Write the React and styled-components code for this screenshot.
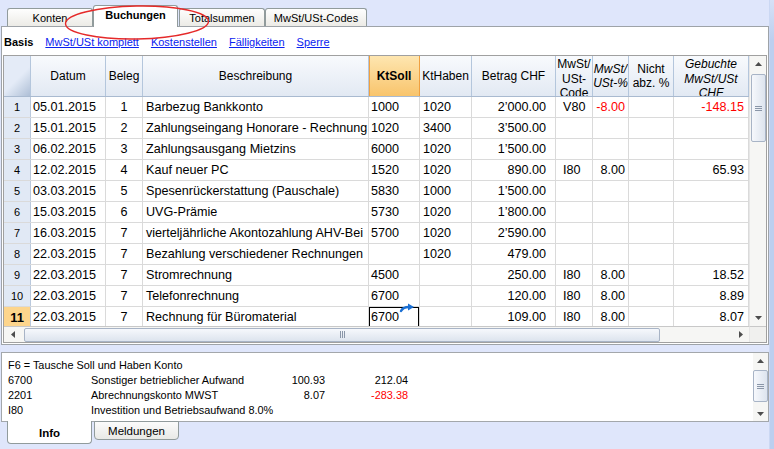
import React from 'react'
import styled, { createGlobalStyle } from 'styled-components'

const GlobalStyle = createGlobalStyle`
  html, body { margin: 0; padding: 0; }
  body {
    background: #dfe6fb;
    font-family: "Liberation Sans", Arial, sans-serif;
  }
`

const COLS = '27px 75px 37px 226px 51px 52px 84px 37px 36px 45px 75px'

const Window = styled.div`
  position: relative;
  width: 774px;
  height: 449px;
  overflow: hidden;
  display: flex;
  background: #dfe6fb;
`

const Main = styled.div`
  width: 769px;
  display: flex;
  flex-direction: column;
`

const EdgeStrip = styled.div`
  width: 4px;
  border-left: 1px solid #cbd8f3;
  background: linear-gradient(#d6e1f7, #bccfef 40px, #bccfef);
`

const TabBar = styled.div`
  height: 26px;
  display: flex;
  align-items: flex-end;
  padding-left: 7px;
  box-sizing: border-box;
`

const Tab = styled.div`
  box-sizing: border-box;
  width: ${p => p.$w}px;
  height: ${p => (p.$active ? 22 : 18)}px;
  margin-right: ${p => p.$gap || 0}px;
  margin-bottom: ${p => (p.$active ? -1 : 0)}px;
  border: 1px solid #919b9c;
  border-bottom: none;
  border-radius: 3px 3px 0 0;
  background: ${p => (p.$active ? '#fff' : 'linear-gradient(#fefefe, #ecebe6)')};
  font-size: 11px;
  font-weight: ${p => (p.$active ? 'bold' : 'normal')};
  color: #000;
  display: flex;
  align-items: center;
  justify-content: center;
  padding-bottom: ${p => (p.$active ? 3 : 0)}px;
  position: relative;
  z-index: ${p => (p.$active ? 2 : 1)};
`

const Panel = styled.div`
  box-sizing: border-box;
  margin-left: 1px;
  width: 768px;
  height: 319px;
  background: #fff;
  border: 1px solid #9ea3a8;
  display: flex;
  flex-direction: column;
`

const SubTabs = styled.div`
  height: 28px;
  display: flex;
  align-items: center;
  gap: 12px;
  padding: 1px 0 0 2px;
  box-sizing: border-box;
  font-size: 11px;
`

const SubTabActive = styled.span`
  font-weight: bold;
  color: #000;
`

const SubTabLink = styled.a`
  color: #0a22f0;
  text-decoration: underline;
  cursor: pointer;
`

const Grid = styled.div`
  box-sizing: border-box;
  margin: 0 1px;
  height: 288px;
  border: 1px solid #a0a0a0;
  display: grid;
  grid-template-columns: 745px 17px;
  grid-template-rows: 270px 16px;
`

const TableArea = styled.div`
  overflow: hidden;
  position: relative;
`

const HeaderRow = styled.div`
  display: grid;
  grid-template-columns: ${COLS};
  height: 41px;
  box-sizing: border-box;
  border-bottom: 1px solid #a9bad0;
`

const HeaderCell = styled.div`
  box-sizing: border-box;
  display: flex;
  flex-direction: column;
  align-items: center;
  justify-content: ${p => (p.$top ? 'flex-start' : 'center')};
  padding-top: ${p => (p.$top ? 1 : 0)}px;
  text-align: center;
  font-size: 12px;
  line-height: 14.5px;
  font-style: ${p => (p.$italic ? 'italic' : 'normal')};
  font-weight: ${p => (p.$active ? 'bold' : 'normal')};
  overflow: hidden;
  border-right: 1px solid ${p => (p.$active ? '#f0a040' : '#b4c6dc')};
  box-shadow: ${p => (p.$active ? 'inset 1px 0 0 #f0a040' : 'none')};
  background: ${p =>
    p.$active
      ? 'linear-gradient(#fee6b0, #f8c46c)'
      : 'linear-gradient(#f8fafd, #e2e9f3)'};
`

const CornerCell = styled.div`
  border-right: 1px solid #b4c6dc;
  background: linear-gradient(135deg, #e4ebf7 55%, #aebfd6);
`

const Row = styled.div`
  display: grid;
  grid-template-columns: ${COLS};
  height: 21px;
  box-sizing: border-box;
  border-bottom: 1px solid #dadada;
  position: relative;
`

const NumCell = styled.div`
  display: flex;
  align-items: center;
  justify-content: center;
  font-size: ${p => (p.$current ? 13 : 11)}px;
  font-weight: ${p => (p.$current ? 'bold' : 'normal')};
  background: ${p => (p.$current ? '#fdd58c' : '#e1e9f5')};
  border-right: 1px solid #b9c8dc;
`

const Cell = styled.div`
  box-sizing: border-box;
  position: relative;
  display: flex;
  align-items: center;
  justify-content: ${p =>
    p.$align === 'right' ? 'flex-end' : p.$align === 'center' ? 'center' : 'flex-start'};
  padding: 0 ${p => (p.$align === 'right' ? p.$pad : 0)}px 0
    ${p => (p.$align === 'left' ? p.$pad : 0)}px;
  font-size: 12.6px;
  white-space: nowrap;
  overflow: ${p => (p.$editing ? 'visible' : 'hidden')};
  color: ${p => (p.$red ? '#ff0000' : '#000')};
  border-right: 1px solid #dadada;
  box-shadow: ${p => (p.$editing ? 'inset 0 0 0 1px #000' : 'none')};
  z-index: ${p => (p.$editing ? 3 : 'auto')};
`

const EditArrow = styled.svg`
  position: absolute;
  left: 31px;
  top: -4px;
  width: 14px;
  height: 9px;
  overflow: visible;
`

const VScroll = styled.div`
  display: flex;
  flex-direction: column;
  align-items: center;
  background: #f6f6f4;
  border-left: 1px solid #e6e6e6;
  position: relative;
`

const HScroll = styled.div`
  display: flex;
  align-items: center;
  background: #f6f6f4;
  border-top: 1px solid #c8c8c8;
  position: relative;
`

const ArrowBox = styled.div`
  width: ${p => p.$w}px;
  height: ${p => p.$h}px;
  display: flex;
  align-items: center;
  justify-content: center;
  flex-shrink: 0;
`

const VThumb = styled.div`
  box-sizing: border-box;
  width: 15px;
  height: ${p => p.$h}px;
  margin-top: ${p => p.$top}px;
  border: 1px solid #a8b4c6;
  border-radius: 2px;
  background: linear-gradient(90deg, #f6f8fc, #dde4ee);
  display: flex;
  align-items: center;
  justify-content: center;
`

const HThumb = styled.div`
  box-sizing: border-box;
  height: 14px;
  width: ${p => p.$w}px;
  margin-left: ${p => p.$left}px;
  border: 1px solid #a8b4c6;
  border-radius: 2px;
  background: linear-gradient(#f6f8fc, #dde4ee);
  display: flex;
  align-items: center;
  justify-content: center;
`

const Spacer = styled.div`
  flex: 1;
`

const Corner = styled.div`
  background: #f0f0ee;
  border-top: 1px solid #c8c8c8;
  border-left: 1px solid #e6e6e6;
`

const InfoPanel = styled.div`
  box-sizing: border-box;
  margin: 7px 0 0 1px;
  width: 768px;
  height: 70px;
  background: #fff;
  border: 1px solid #a3a7ab;
  display: flex;
`

const InfoText = styled.div`
  flex: 1;
  padding: 5px 0 0 6px;
  display: grid;
  grid-template-columns: 83px 174px 60px 83px;
  grid-auto-rows: 15px;
  align-content: start;
  font-size: 10.9px;
  line-height: 15px;
`

const InfoFull = styled.div`
  grid-column: 1 / -1;
`

const InfoCol = styled.div`
  text-align: ${p => (p.$right ? 'right' : 'left')};
  color: ${p => (p.$red ? '#ff0000' : '#000')};
  white-space: nowrap;
`

const InfoScroll = styled.div`
  width: 15px;
  display: flex;
  flex-direction: column;
  align-items: center;
  background: #f6f6f4;
`

const BottomTabs = styled.div`
  display: flex;
  align-items: flex-start;
  padding-left: 7px;
`

const BottomTab = styled.div`
  box-sizing: border-box;
  width: ${p => p.$w}px;
  height: ${p => (p.$active ? 23 : 19)}px;
  margin-top: -1px;
  margin-right: 2px;
  border: 1px solid #919b9c;
  border-top: ${p => (p.$active ? 'none' : '1px solid #919b9c')};
  border-radius: 0 0 4px 4px;
  background: ${p => (p.$active ? '#fff' : 'linear-gradient(#fbfbfb, #e9e9e6)')};
  font-size: 11.5px;
  font-weight: ${p => (p.$active ? 'bold' : 'normal')};
  display: flex;
  align-items: center;
  justify-content: center;
  padding-top: ${p => (p.$active ? 2 : 0)}px;
  position: relative;
  z-index: ${p => (p.$active ? 2 : 1)};
`

const Ellipse = styled.svg`
  position: absolute;
  left: 60px;
  top: 3px;
  width: 156px;
  height: 40px;
  pointer-events: none;
  z-index: 5;
`

const columns = [
  { key: 'datum', title: ['Datum'], align: 'left', pad: 2 },
  { key: 'beleg', title: ['Beleg'], align: 'center', pad: 0 },
  { key: 'text', title: ['Beschreibung'], align: 'left', pad: 3 },
  { key: 'soll', title: ['KtSoll'], align: 'left', pad: 2, active: true },
  { key: 'haben', title: ['KtHaben'], align: 'left', pad: 3 },
  { key: 'betrag', title: ['Betrag CHF'], align: 'right', pad: 9 },
  { key: 'code', title: ['MwSt/', 'USt-', 'Code'], align: 'left', pad: 7, top: true },
  { key: 'pct', title: ['MwSt/', 'USt-%'], align: 'right', pad: 3, italic: true },
  { key: 'nicht', title: ['Nicht', 'abz. %'], align: 'right', pad: 3 },
  { key: 'mwst', title: ['Gebuchte', 'MwSt/USt', 'CHF'], align: 'right', pad: 4, italic: true, top: true },
]

const rows = [
  { datum: '05.01.2015', beleg: '1', text: 'Barbezug Bankkonto', soll: '1000', haben: '1020', betrag: '2’000.00', code: 'V80', pct: '-8.00', mwst: '-148.15', red: ['pct', 'mwst'] },
  { datum: '15.01.2015', beleg: '2', text: 'Zahlungseingang Honorare - Rechnung', soll: '1020', haben: '3400', betrag: '3’500.00' },
  { datum: '06.02.2015', beleg: '3', text: 'Zahlungsausgang Mietzins', soll: '6000', haben: '1020', betrag: '1’500.00' },
  { datum: '12.02.2015', beleg: '4', text: 'Kauf neuer PC', soll: '1520', haben: '1020', betrag: '890.00', code: 'I80', pct: '8.00', mwst: '65.93' },
  { datum: '03.03.2015', beleg: '5', text: 'Spesenrückerstattung (Pauschale)', soll: '5830', haben: '1000', betrag: '1’500.00' },
  { datum: '15.03.2015', beleg: '6', text: 'UVG-Prämie', soll: '5730', haben: '1020', betrag: '1’800.00' },
  { datum: '16.03.2015', beleg: '7', text: 'vierteljährliche Akontozahlung AHV-Bei', soll: '5700', haben: '1020', betrag: '2’590.00' },
  { datum: '22.03.2015', beleg: '7', text: 'Bezahlung verschiedener Rechnungen', soll: '', haben: '1020', betrag: '479.00' },
  { datum: '22.03.2015', beleg: '7', text: 'Stromrechnung', soll: '4500', haben: '', betrag: '250.00', code: 'I80', pct: '8.00', mwst: '18.52' },
  { datum: '22.03.2015', beleg: '7', text: 'Telefonrechnung', soll: '6700', haben: '', betrag: '120.00', code: 'I80', pct: '8.00', mwst: '8.89' },
  { datum: '22.03.2015', beleg: '7', text: 'Rechnung für Büromaterial', soll: '6700', haben: '', betrag: '109.00', code: 'I80', pct: '8.00', mwst: '8.07', current: true },
]

const Tri = ({ dir }) => {
  const pts = {
    up: '0,4 3.5,0 7,4',
    down: '0,0 3.5,4 7,0',
    left: '4,0 0,3.5 4,7',
    right: '0,0 4,3.5 0,7',
  }[dir]
  const vert = dir === 'up' || dir === 'down'
  return (
    <svg width={vert ? 7 : 4} height={vert ? 4 : 7} viewBox={vert ? '0 0 7 4' : '0 0 4 7'}>
      <polygon points={pts} fill="#4d4d4d" />
    </svg>
  )
}

const Grip = ({ vertical }) =>
  vertical ? (
    <svg width="7" height="7" viewBox="0 0 7 7">
      <path d="M0 1.5h7M0 3.5h7M0 5.5h7" stroke="#8a96a8" strokeWidth="1" />
    </svg>
  ) : (
    <svg width="7" height="7" viewBox="0 0 7 7">
      <path d="M1.5 0v7M3.5 0v7M5.5 0v7" stroke="#8a96a8" strokeWidth="1" />
    </svg>
  )

export default function App() {
  return (
    <Window>
      <GlobalStyle />
      <Main>
        <TabBar>
          <Tab $w={86}>Konten</Tab>
          <Tab $w={85} $gap={1} $active>Buchungen</Tab>
          <Tab $w={86}>Totalsummen</Tab>
          <Tab $w={102}>MwSt/USt-Codes</Tab>
        </TabBar>

        <Panel>
          <SubTabs>
            <SubTabActive>Basis</SubTabActive>
            <SubTabLink>MwSt/USt komplett</SubTabLink>
            <SubTabLink>Kostenstellen</SubTabLink>
            <SubTabLink>Fälligkeiten</SubTabLink>
            <SubTabLink>Sperre</SubTabLink>
          </SubTabs>

          <Grid>
            <TableArea>
              <HeaderRow>
                <CornerCell />
                {columns.map(c => (
                  <HeaderCell key={c.key} $active={c.active} $italic={c.italic} $top={c.top}>
                    {c.title.map(t => (
                      <span key={t}>{t}</span>
                    ))}
                  </HeaderCell>
                ))}
              </HeaderRow>
              {rows.map((r, i) => (
                <Row key={i}>
                  <NumCell $current={r.current}>{i + 1}</NumCell>
                  {columns.map(c => {
                    const editing = r.current && c.key === 'soll'
                    return (
                      <Cell
                        key={c.key}
                        $align={c.align}
                        $pad={c.pad}
                        $red={r.red && r.red.includes(c.key)}
                        $editing={editing}
                      >
                        {r[c.key] || ''}
                        {editing && (
                          <EditArrow viewBox="0 0 14 9">
                            <path d="M1 8 C2.5 5 5 4 9 4" fill="none" stroke="#1a6fd4" strokeWidth="2.4" strokeLinecap="round" />
                            <polygon points="8,0.5 14,4 8,7.5" fill="#1a6fd4" />
                          </EditArrow>
                        )}
                      </Cell>
                    )
                  })}
                </Row>
              ))}
            </TableArea>

            <VScroll>
              <ArrowBox $w={16} $h={16}><Tri dir="up" /></ArrowBox>
              <VThumb $h={68} $top={2}><Grip vertical /></VThumb>
              <Spacer />
              <ArrowBox $w={16} $h={16}><Tri dir="down" /></ArrowBox>
            </VScroll>

            <HScroll>
              <ArrowBox $w={18} $h={15}><Tri dir="left" /></ArrowBox>
              <HThumb $w={636} $left={2}><Grip /></HThumb>
              <Spacer />
              <ArrowBox $w={16} $h={15}><Tri dir="right" /></ArrowBox>
            </HScroll>
            <Corner />
          </Grid>
        </Panel>

        <InfoPanel>
          <InfoText>
            <InfoFull>F6 = Tausche Soll und Haben Konto</InfoFull>
            <InfoCol>6700</InfoCol>
            <InfoCol>Sonstiger betrieblicher Aufwand</InfoCol>
            <InfoCol $right>100.93</InfoCol>
            <InfoCol $right>212.04</InfoCol>
            <InfoCol>2201</InfoCol>
            <InfoCol>Abrechnungskonto MWST</InfoCol>
            <InfoCol $right>8.07</InfoCol>
            <InfoCol $right $red>-283.38</InfoCol>
            <InfoCol>I80</InfoCol>
            <InfoCol>Investition und Betriebsaufwand 8.0%</InfoCol>
          </InfoText>
          <InfoScroll>
            <ArrowBox $w={15} $h={16}><Tri dir="up" /></ArrowBox>
            <VThumb $h={32} $top={1}><Grip vertical /></VThumb>
            <Spacer />
            <ArrowBox $w={15} $h={15}><Tri dir="down" /></ArrowBox>
          </InfoScroll>
        </InfoPanel>

        <BottomTabs>
          <BottomTab $w={85} $active>Info</BottomTab>
          <BottomTab $w={85}>Meldungen</BottomTab>
        </BottomTabs>
      </Main>
      <EdgeStrip />

      <Ellipse viewBox="0 0 156 40">
        <ellipse cx="77" cy="19.5" rx="71.5" ry="16.5" fill="none" stroke="#e52a2a" strokeWidth="1.4" transform="rotate(-1 77 19.5)" />
      </Ellipse>
    </Window>
  )
}
